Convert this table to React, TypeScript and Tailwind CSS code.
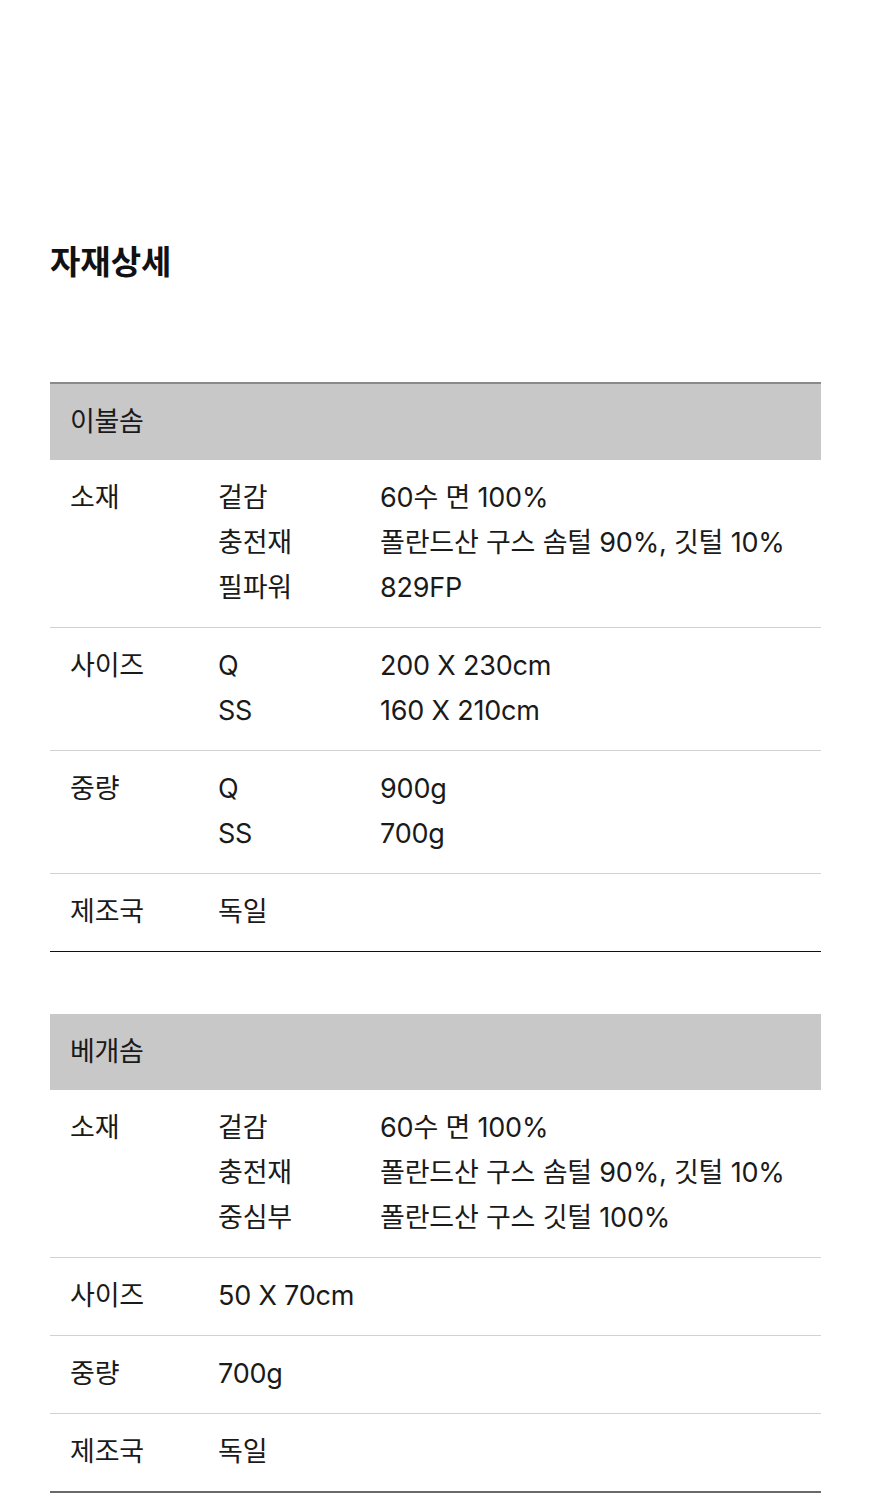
import React from "react";

type Row = { label: string; lines: [string, string?][] };

const font = { fontFamily: 'Inter, "Noto Sans CJK KR", "Noto Sans", sans-serif' };

function Table({ title, rows, topBorder, bottomClass }: { title: string; rows: Row[]; topBorder: boolean; bottomClass: string }) {
  return (
    <div className={`w-[771px] ${topBorder ? "border-t-2 border-[#8a8a8a]" : ""}`}>
      <div className="bg-[#c8c8c8] h-[76px] flex items-center pl-[20px] text-[27px] text-[#1a1a1a] tracking-[-0.3px]">
        {title}
      </div>
      {rows.map((r, i) => (
        <div
          key={i}
          className={`flex pt-[15px] pb-[17px] text-[27px] leading-[45px] text-[#1a1a1a] tracking-[-0.2px] ${i === rows.length - 1 ? bottomClass : "border-b border-[#d2d2d2]"}`}
        >
          <div className="w-[168px] pl-[20px] shrink-0">{r.label}</div>
          <div className="flex flex-col">
            {r.lines.map((l, j) =>
              l[1] !== undefined ? (
                <div key={j} className="flex">
                  <div className="w-[162px] shrink-0">{l[0]}</div>
                  <div>{l[1]}</div>
                </div>
              ) : (
                <div key={j}>{l[0]}</div>
              )
            )}
          </div>
        </div>
      ))}
    </div>
  );
}

export default function App() {
  return (
    <div className="w-[870px] h-[1507px] bg-white pl-[50px] pt-[238px]" style={font}>
      <h1 className="text-[33px] font-bold leading-[48px] text-[#111] m-0">자재상세</h1>
      <div className="mt-[96px]">
        <Table
          title="이불솜"
          topBorder
          bottomClass="border-b-[1.5px] border-[#111]"
          rows={[
            { label: "소재", lines: [["겉감", "60수 면 100%"], ["충전재", "폴란드산 구스 솜털 90%, 깃털 10%"], ["필파워", "829FP"]] },
            { label: "사이즈", lines: [["Q", "200 X 230cm"], ["SS", "160 X 210cm"]] },
            { label: "중량", lines: [["Q", "900g"], ["SS", "700g"]] },
            { label: "제조국", lines: [["독일"]] },
          ]}
        />
      </div>
      <div className="mt-[62px]">
        <Table
          title="베개솜"
          topBorder={false}
          bottomClass="border-b-2 border-[#6a6a6a]"
          rows={[
            { label: "소재", lines: [["겉감", "60수 면 100%"], ["충전재", "폴란드산 구스 솜털 90%, 깃털 10%"], ["중심부", "폴란드산 구스 깃털 100%"]] },
            { label: "사이즈", lines: [["50 X 70cm"]] },
            { label: "중량", lines: [["700g"]] },
            { label: "제조국", lines: [["독일"]] },
          ]}
        />
      </div>
    </div>
  );
}
